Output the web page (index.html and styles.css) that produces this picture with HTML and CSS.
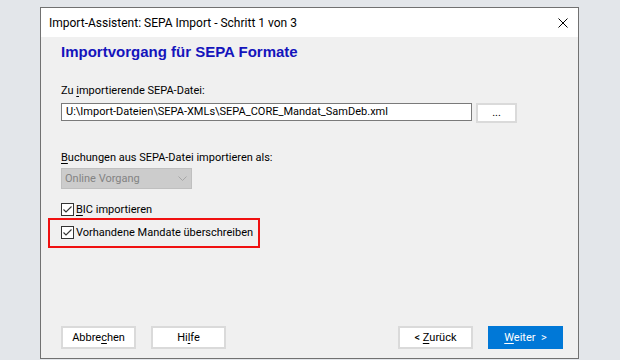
FILE: index.html
```html
<!DOCTYPE html>
<html lang="de">
<head>
<meta charset="utf-8">
<title>Import-Assistent</title>
<link rel="stylesheet" href="styles.css">
</head>
<body>
<div class="desk">
  <div class="win">
    <div class="titlebar">
      <span class="title">Import-Assistent: SEPA Import - Schritt 1 von 3</span>
      <svg class="close" width="10" height="10" viewBox="0 0 10 10"><path d="M0.5 0.5 L9.5 9.5 M9.5 0.5 L0.5 9.5" stroke="#000" stroke-width="1" fill="none"/></svg>
    </div>
    <div class="content">
      <h1 class="heading">Importvorgang für SEPA Formate</h1>
      <div class="label label-file">Zu <u>i</u>mportierende SEPA-Datei:</div>
      <div class="filerow">
        <div class="field">U:\Import-Dateien\SEPA-XMLs\SEPA_CORE_Mandat_SamDeb.xml</div>
        <div class="btn btn-browse">...</div>
      </div>
      <div class="label label-mode"><u>B</u>uchungen aus SEPA-Datei importieren als:</div>
      <div class="combo">
        <span class="combo-text">Online Vorgang</span>
        <svg class="chevron" width="9" height="5" viewBox="0 0 9 5"><path d="M0.5 0.5 L4.5 4.5 L8.5 0.5" stroke="#a6a6a6" stroke-width="1" fill="none"/></svg>
      </div>
      <div class="check check-bic">
        <span class="box"><svg width="11" height="11" viewBox="0 0 11 11"><path d="M1.5 5.5 L4 8 L9.5 2.5" stroke="#333" stroke-width="1.1" fill="none"/></svg></span>
        <span class="check-text"><u>B</u>IC importieren</span>
      </div>
      <div class="highlight">
        <div class="check">
          <span class="box"><svg width="11" height="11" viewBox="0 0 11 11"><path d="M1.5 5.5 L4 8 L9.5 2.5" stroke="#333" stroke-width="1.1" fill="none"/></svg></span>
          <span class="check-text">Vorhandene Mandate überschreiben</span>
        </div>
      </div>
      <div class="footer">
        <div class="btn">Abbre<u>c</u>hen</div>
        <div class="btn">Hi<u>l</u>fe</div>
        <div class="spacer"></div>
        <div class="btn">&lt; <u>Z</u>urück</div>
        <div class="btn btn-primary"><u>W</u>eiter&nbsp; &gt;</div>
      </div>
    </div>
  </div>
</div>
</body>
</html>
```
FILE: styles.css
```css
html, body {
  margin: 0;
  padding: 0;
}
body {
  width: 620px;
  height: 360px;
  overflow: hidden;
  background: #e3e6ea;
  font-family: Roboto, "Liberation Sans", sans-serif;
  font-size: 11px;
  color: #000;
}
.desk {
  padding: 7px 0 0 40px;
}
.win {
  width: 539px;
  height: 352px;
  box-sizing: border-box;
  border: 1px solid #717171;
  background: #f0f0f0;
  display: flex;
  flex-direction: column;
}
.titlebar {
  height: 29px;
  flex: none;
  background: #fff;
  display: flex;
  align-items: center;
  padding-left: 8px;
}
.title {
  font-size: 12px;
  line-height: 16px;
}
.close {
  margin-left: auto;
  margin-right: 10px;
  display: block;
}
.content {
  flex: 1;
  display: flex;
  flex-direction: column;
  align-items: flex-start;
  padding: 0 15px 9px 20px;
}
.heading {
  margin: 5px 0 0 0;
  font-family: "Liberation Sans", Arial, sans-serif;
  font-weight: bold;
  font-size: 15px;
  line-height: 20px;
  color: #1414bc;
}
u {
  text-decoration: underline;
  text-decoration-thickness: 1px;
  text-underline-offset: 2px;
}
.label {
  line-height: 16px;
}
.label-file {
  margin-top: 21px;
}
.filerow {
  margin-top: 4px;
  display: flex;
  align-items: flex-start;
  gap: 4px;
}
.field {
  width: 411px;
  height: 18px;
  box-sizing: border-box;
  border: 1px solid #7a7a7a;
  background: #fff;
  padding-left: 4px;
  line-height: 16px;
  white-space: nowrap;
}
.btn {
  width: 75px;
  height: 23px;
  box-sizing: border-box;
  border: 2px solid #dadada;
  background: #fff;
  line-height: 19px;
  text-align: center;
}
.btn-browse {
  width: 41px;
  height: 20px;
  line-height: 16px;
}
.label-mode {
  margin-top: 27px;
}
.combo {
  margin-top: 2px;
  width: 131px;
  height: 21px;
  box-sizing: border-box;
  border: 1px solid #bfbfbf;
  background: #cccccc;
  display: flex;
  align-items: center;
  padding: 0 4px 0 3px;
  color: #838383;
  line-height: 19px;
}
.chevron {
  margin-left: auto;
  display: block;
}
.check {
  display: flex;
  align-items: flex-start;
  gap: 2px;
  line-height: 16px;
}
.check-bic {
  margin-top: 13px;
}
.box {
  margin-top: 1px;
  width: 13px;
  height: 13px;
  box-sizing: border-box;
  border: 1px solid #333;
  background: #fff;
  display: block;
}
.box svg {
  display: block;
}
.highlight {
  margin-left: -13px;
  width: 212px;
  height: 30px;
  box-sizing: border-box;
  border: 2px solid #f01010;
  padding: 5px 0 5px 11px;
}
.footer {
  margin-top: auto;
  align-self: stretch;
  display: flex;
  gap: 15px;
}
.spacer {
  flex: 1;
}
.btn-primary {
  background: #0078d7;
  border-color: #0078d7;
  color: #fff;
}
.btn-primary u {
  text-decoration-color: #fff;
}
```
